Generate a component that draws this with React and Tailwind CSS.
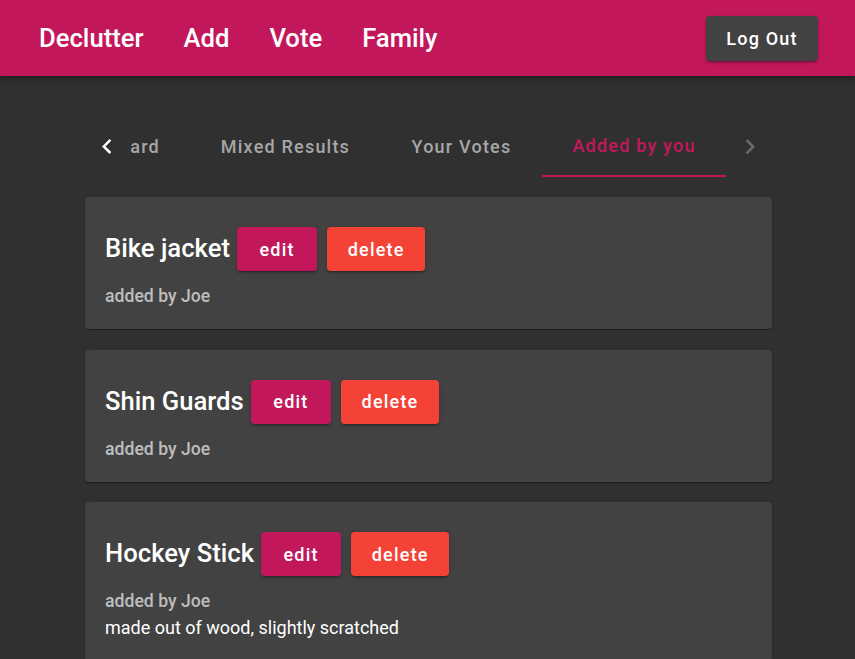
import React from "react";

const font = { fontFamily: "Roboto, 'Noto Sans', sans-serif" };
const med = { fontFamily: "'Roboto Medium', Roboto, 'Noto Sans', sans-serif", fontWeight: 500 };

function ChevronLeft({ className }) {
  return (
    <svg viewBox="0 0 24 24" width="30" height="30" className={className} fill="currentColor">
      <path d="M15.41 16.09l-4.58-4.59 4.58-4.59L14 5.5l-6 6 6 6z" />
    </svg>
  );
}

function ChevronRight({ className }) {
  return (
    <svg viewBox="0 0 24 24" width="30" height="30" className={className} fill="currentColor">
      <path d="M8.59 16.34l4.58-4.59-4.58-4.59L10 5.75l6 6-6 6z" />
    </svg>
  );
}

function Card({ title, extra }) {
  return (
    <div className="bg-[#424242] rounded-[4px] shadow-[0_2px_1px_-1px_rgba(0,0,0,0.2),0_1px_1px_0_rgba(0,0,0,0.14),0_1px_3px_0_rgba(0,0,0,0.12)] pt-[30px] pb-[20px] px-[20px]">
      <div className="flex items-center">
        <span style={med} className="text-[25.6px] text-white leading-none">{title}</span>
        <button style={med} className="ml-[7px] h-[44px] px-[22.5px] rounded-[4px] bg-[#c2185b] text-white text-[18px] tracking-[1.2px] shadow-[0_3px_1px_-2px_rgba(0,0,0,0.2),0_2px_2px_0_rgba(0,0,0,0.14),0_1px_5px_0_rgba(0,0,0,0.12)]">
          edit
        </button>
        <button style={med} className="ml-[10px] h-[44px] px-[20.5px] rounded-[4px] bg-[#f44336] text-white text-[18px] tracking-[1.2px] shadow-[0_3px_1px_-2px_rgba(0,0,0,0.2),0_2px_2px_0_rgba(0,0,0,0.14),0_1px_5px_0_rgba(0,0,0,0.12)]">
          delete
        </button>
      </div>
      <div style={med} className="mt-[12px] text-[17.6px] leading-[26px] text-[#bdbdbd]">added by Joe</div>
      {extra && <div className="text-[18px] leading-[27px] text-white">{extra}</div>}
    </div>
  );
}

export default function App() {
  return (
    <div style={font} className="min-h-screen bg-[#303030]">
      <header className="h-[76px] bg-[#c2185b] flex items-center pl-[39px] pr-[37px] shadow-[0_2px_4px_-1px_rgba(0,0,0,0.2),0_4px_5px_0_rgba(0,0,0,0.14),0_1px_10px_0_rgba(0,0,0,0.12)]">
        <nav style={med} className="flex items-center gap-[40px] text-white text-[25.6px]">
          <span>Declutter</span>
          <span>Add</span>
          <span>Vote</span>
          <span>Family</span>
        </nav>
        <button style={med} className="ml-auto h-[45px] w-[112px] rounded-[4px] bg-[#424242] text-white text-[18px] tracking-[1.2px] shadow-[0_3px_1px_-2px_rgba(0,0,0,0.2),0_2px_2px_0_rgba(0,0,0,0.14),0_1px_5px_0_rgba(0,0,0,0.12)]">
          Log Out
        </button>
      </header>

      <main className="w-[687px] ml-[85px]">
        <div className="mt-[40px] h-[61px] flex">
          <div className="w-[44px] flex items-center justify-center text-white">
            <ChevronLeft />
          </div>
          <div style={med} className="flex-1 flex overflow-hidden text-[18px] tracking-[1.2px] text-[#a6a6a6]">
            <div className="w-[61px] shrink-0 flex items-center justify-end pr-[30px]">ard</div>
            <div className="w-[191px] shrink-0 flex items-center justify-center">Mixed Results</div>
            <div className="w-[161px] shrink-0 flex items-center justify-center">Your Votes</div>
            <div className="w-[184px] shrink-0 flex items-center justify-center text-[#c2185b] border-b-2 border-[#c2185b]">
              Added by you
            </div>
          </div>
          <div className="w-[44px] flex items-center justify-center text-[#6b6b6b]">
            <ChevronRight />
          </div>
        </div>

        <div className="mt-[20px] flex flex-col gap-[20.5px]">
          <Card title="Bike jacket" />
          <Card title="Shin Guards" />
          <Card title="Hockey Stick" extra="made out of wood, slightly scratched" />
        </div>
      </main>
    </div>
  );
}
